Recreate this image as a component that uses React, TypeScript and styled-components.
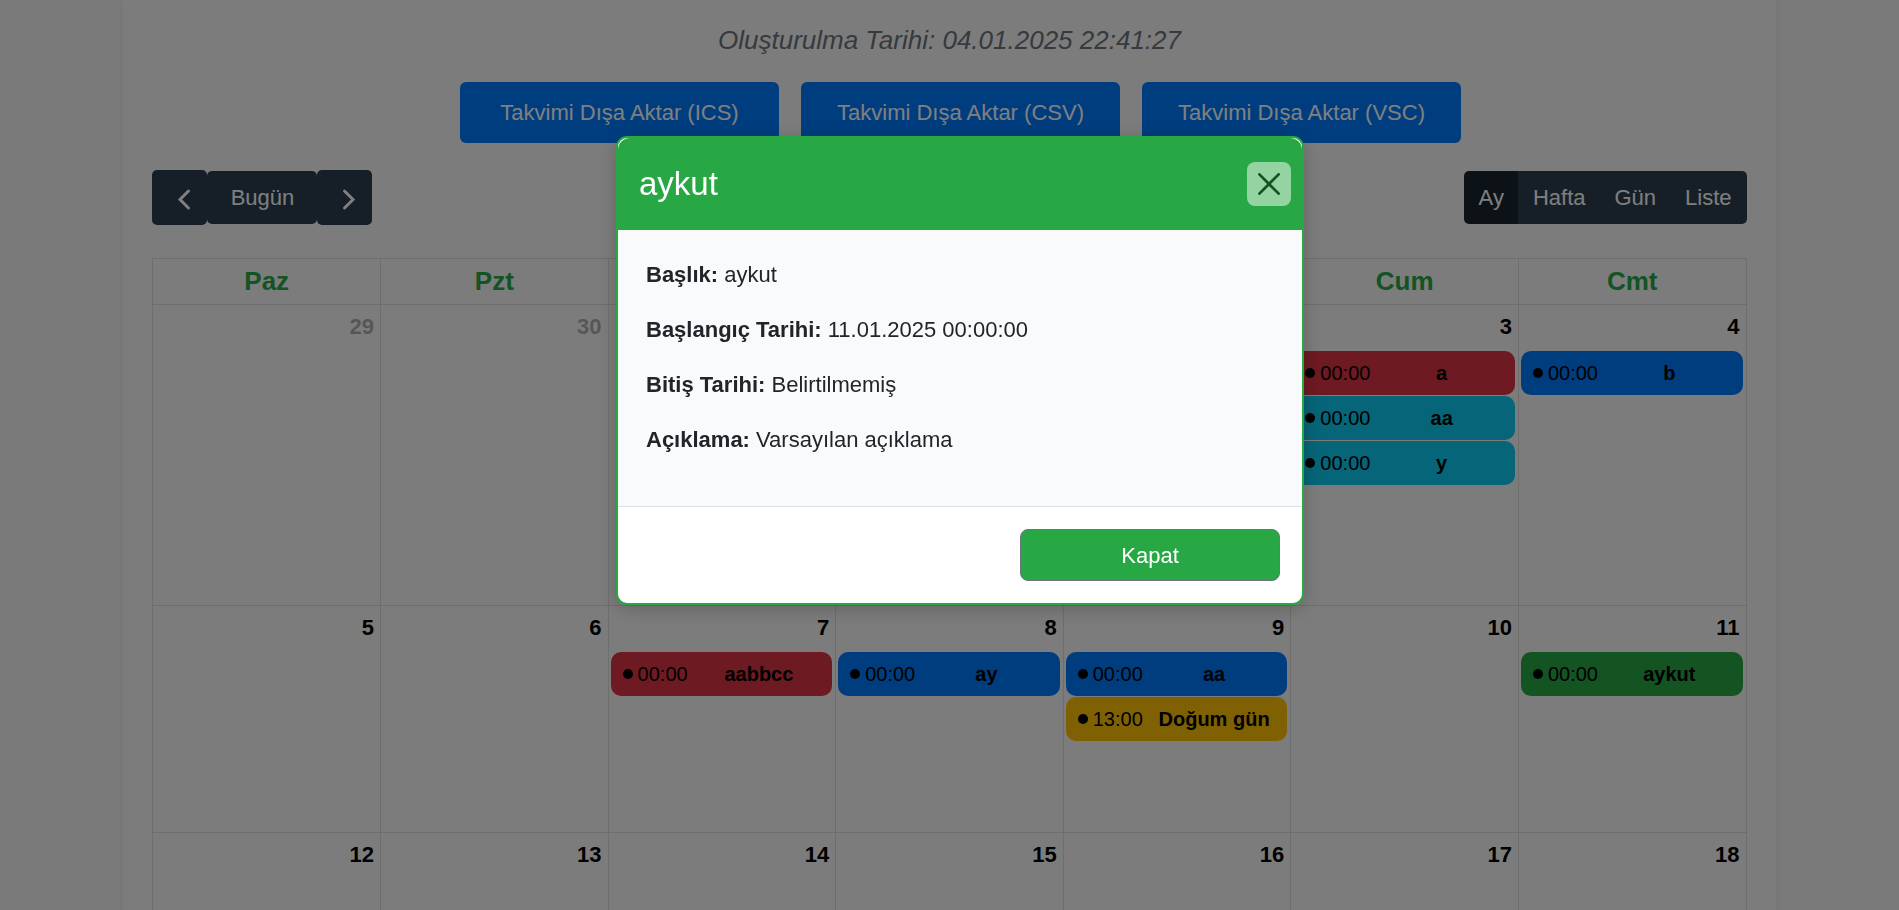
import React, { useState } from "react";
import styled, { createGlobalStyle } from "styled-components";

const GlobalStyle = createGlobalStyle`
  *, *::before, *::after { box-sizing: border-box; }
  body {
    margin: 0;
    overflow: hidden;
    background: #f4f4f4;
    color: #212529;
    font-family: "Liberation Sans", Arial, sans-serif;
    font-size: 22px;
    line-height: 33px;
  }
  button { font: inherit; cursor: pointer; }
`;

const Container = styled.main`
  width: 87%;
  min-height: 100vh;
  margin: 0 auto;
  padding: 20px 29px;
  background: #f9f9f9;
  box-shadow: 0 0 8px rgba(0, 0, 0, 0.05);
`;

const CreatedAt = styled.p`
  margin: 0;
  color: #6c757d;
  font-size: 26px;
  font-style: italic;
  line-height: 40px;
  text-align: center;
`;

const ExportBar = styled.div`
  display: flex;
  justify-content: center;
  margin: 22px 0 27px;
`;

const ExportButton = styled.button`
  min-width: 319px;
  height: 61px;
  margin-left: 22px;
  border: 0;
  border-radius: 6px;
  background: #007bff;
  color: #fff;
`;

const Toolbar = styled.div`
  display: flex;
  align-items: center;
  justify-content: space-between;
  margin-bottom: 33px;
`;

const ButtonGroup = styled.div`
  display: flex;
  align-items: center;
`;

const NavButton = styled.button<{ $wide?: boolean }>`
  display: flex;
  align-items: center;
  justify-content: center;
  width: ${(p) => (p.$wide ? "110px" : "55px")};
  height: ${(p) => (p.$wide ? "53px" : "55px")};
  padding: 0;
  border: 0;
  border-radius: 5px;
  background: #2c3e50;
  color: #fff;
`;

const ViewButton = styled.button<{ $active?: boolean }>`
  height: 53px;
  padding: 0 15px;
  border: 0;
  background: ${(p) => (p.$active ? "#1a252f" : "#2c3e50")};
  color: #fff;

  &:not(:first-child) { margin-left: -1px; }
  &:first-child { border-radius: 5px 0 0 5px; }
  &:last-child { border-radius: 0 5px 5px 0; }
`;

const Calendar = styled.table`
  width: 100%;
  border-collapse: collapse;
  table-layout: fixed;
`;

const WeekdayCell = styled.th`
  height: 46px;
  padding: 0;
  border: 1px solid #ddd;
  color: #28a745;
  font-size: 26px;
`;

const DayCell = styled.td<{ $height: number }>`
  height: ${(p) => p.$height}px;
  padding: 0 2px;
  border: 1px solid #ddd;
  vertical-align: top;
`;

const DayNumber = styled.div<{ $muted?: boolean }>`
  padding: 5px 4px 8px;
  color: #000;
  font-weight: bold;
  text-align: right;
  opacity: ${(p) => (p.$muted ? 0.3 : 1)};
`;

const EventList = styled.div`
  display: flex;
  flex-direction: column;
  gap: 1px;
`;

const EventItem = styled.a<{ $color: string }>`
  display: flex;
  align-items: center;
  height: 44px;
  margin: 0 1px 0 0;
  padding: 0 8px;
  border-radius: 10px;
  background: ${(p) => p.$color};
  color: #000;
  font-size: 20px;
  line-height: 30px;
  text-decoration: none;
`;

const EventDot = styled.span`
  flex: none;
  width: 10px;
  height: 10px;
  margin: 0 5px 0 4px;
  border-radius: 50%;
  background: #000;
`;

const EventTime = styled.span`
  margin-right: 6px;
`;

const EventTitle = styled.strong`
  flex: 1;
  min-width: 0;
  overflow: hidden;
  text-align: center;
  white-space: nowrap;
`;

const Backdrop = styled.div`
  position: fixed;
  inset: 0;
  display: flex;
  align-items: flex-start;
  justify-content: center;
  padding: 136px 0 0 21px;
  background: rgba(0, 0, 0, 0.5);
`;

const Dialog = styled.section`
  width: 688px;
  max-width: 100%;
  border: 2px solid #28a745;
  border-radius: 11px;
  background: #fff;
  box-shadow: 0 4px 20px rgba(0, 0, 0, 0.2);
`;

const DialogHeader = styled.header`
  display: flex;
  align-items: center;
  justify-content: space-between;
  height: 92px;
  padding: 0 11px 0 21px;
  border-radius: 12px 12px 0 0;
  background: #28a745;
`;

const DialogTitle = styled.h5`
  margin: 0;
  color: #fff;
  font-size: 33px;
  font-weight: normal;
  line-height: 50px;
`;

const CloseButton = styled.button`
  display: flex;
  width: 44px;
  height: 44px;
  padding: 11px;
  border: 0;
  border-radius: 8px;
  background: #fff;
  color: #000;
  opacity: 0.5;
`;

const DialogBody = styled.div`
  padding: 28px;
  background: #f8fafc;
`;

const Detail = styled.p`
  margin: 0 0 22px;
`;

const DialogFooter = styled.footer`
  display: flex;
  justify-content: flex-end;
  padding: 22px;
  border-top: 1px solid #dee2e6;
`;

const DismissButton = styled.button`
  width: 260px;
  height: 52px;
  border: 1px solid #6c757d;
  border-radius: 8px;
  background: #28a745;
  color: #fff;
`;

const Chevron = ({ direction }: { direction: "left" | "right" }) => (
  <svg
    width="33"
    height="33"
    viewBox="0 0 33 33"
    fill="none"
    stroke="currentColor"
    strokeWidth="3"
    strokeLinecap="round"
    aria-hidden="true"
  >
    <path d={direction === "left" ? "M25.5 10L17 18.5L25.5 27" : "M16.5 10L25 18.5L16.5 27"} />
  </svg>
);

const CloseIcon = () => (
  <svg width="22" height="22" viewBox="0 0 16 16" fill="currentColor" aria-hidden="true">
    <path d="M.293.293a1 1 0 0 1 1.414 0L8 6.586 14.293.293a1 1 0 1 1 1.414 1.414L9.414 8l6.293 6.293a1 1 0 0 1-1.414 1.414L8 9.414l-6.293 6.293a1 1 0 0 1-1.414-1.414L6.586 8 .293 1.707a1 1 0 0 1 0-1.414z" />
  </svg>
);

type CalendarEvent = { time: string; title: string; color: string };
type Day = { day: number; muted?: boolean; events?: CalendarEvent[] };

const red = "#dc3545";
const cyan = "#0dcaf0";
const blue = "#007bff";
const yellow = "#ffc107";
const green = "#28a745";

const exportFormats = ["ICS", "CSV", "VSC"];
const views = ["Ay", "Hafta", "Gün", "Liste"];
const weekdays = ["Paz", "Pzt", "Sal", "Çar", "Per", "Cum", "Cmt"];

const weeks: { height: number; days: Day[] }[] = [
  {
    height: 301,
    days: [
      { day: 29, muted: true },
      { day: 30, muted: true },
      { day: 31, muted: true },
      { day: 1 },
      { day: 2 },
      {
        day: 3,
        events: [
          { time: "00:00", title: "a", color: red },
          { time: "00:00", title: "aa", color: cyan },
          { time: "00:00", title: "y", color: cyan },
        ],
      },
      { day: 4, events: [{ time: "00:00", title: "b", color: blue }] },
    ],
  },
  {
    height: 227,
    days: [
      { day: 5 },
      { day: 6 },
      { day: 7, events: [{ time: "00:00", title: "aabbcc", color: red }] },
      { day: 8, events: [{ time: "00:00", title: "ay", color: blue }] },
      {
        day: 9,
        events: [
          { time: "00:00", title: "aa", color: blue },
          { time: "13:00", title: "Doğum gün", color: yellow },
        ],
      },
      { day: 10 },
      { day: 11, events: [{ time: "00:00", title: "aykut", color: green }] },
    ],
  },
  {
    height: 227,
    days: [12, 13, 14, 15, 16, 17, 18].map((day) => ({ day })),
  },
];

const details = [
  ["Başlık:", "aykut"],
  ["Başlangıç Tarihi:", "11.01.2025 00:00:00"],
  ["Bitiş Tarihi:", "Belirtilmemiş"],
  ["Açıklama:", "Varsayılan açıklama"],
];

export default function App() {
  const [open, setOpen] = useState(true);
  const [view, setView] = useState("Ay");

  return (
    <>
      <GlobalStyle />
      <Container>
        <CreatedAt>Oluşturulma Tarihi: 04.01.2025 22:41:27</CreatedAt>
        <ExportBar>
          {exportFormats.map((format) => (
            <ExportButton key={format}>Takvimi Dışa Aktar ({format})</ExportButton>
          ))}
        </ExportBar>
        <Toolbar>
          <ButtonGroup>
            <NavButton aria-label="Önceki"><Chevron direction="left" /></NavButton>
            <NavButton $wide>Bugün</NavButton>
            <NavButton aria-label="Sonraki"><Chevron direction="right" /></NavButton>
          </ButtonGroup>
          <ButtonGroup>
            {views.map((name) => (
              <ViewButton key={name} $active={name === view} onClick={() => setView(name)}>
                {name}
              </ViewButton>
            ))}
          </ButtonGroup>
        </Toolbar>
        <Calendar>
          <thead>
            <tr>
              {weekdays.map((name) => (
                <WeekdayCell key={name} scope="col">{name}</WeekdayCell>
              ))}
            </tr>
          </thead>
          <tbody>
            {weeks.map((week) => (
              <tr key={week.days[0].day}>
                {week.days.map(({ day, muted, events }) => (
                  <DayCell key={day} $height={week.height}>
                    <DayNumber $muted={muted}>{day}</DayNumber>
                    <EventList>
                      {events?.map((event) => (
                        <EventItem key={event.title} href="#" $color={event.color}>
                          <EventDot />
                          <EventTime>{event.time}</EventTime>
                          <EventTitle>{event.title}</EventTitle>
                        </EventItem>
                      ))}
                    </EventList>
                  </DayCell>
                ))}
              </tr>
            ))}
          </tbody>
        </Calendar>
      </Container>
      {open && (
        <Backdrop>
          <Dialog role="dialog" aria-modal="true" aria-labelledby="event-title">
            <DialogHeader>
              <DialogTitle id="event-title">aykut</DialogTitle>
              <CloseButton aria-label="Kapat" onClick={() => setOpen(false)}><CloseIcon /></CloseButton>
            </DialogHeader>
            <DialogBody>
              {details.map(([label, value]) => (
                <Detail key={label}><strong>{label}</strong> {value}</Detail>
              ))}
            </DialogBody>
            <DialogFooter>
              <DismissButton onClick={() => setOpen(false)}>Kapat</DismissButton>
            </DialogFooter>
          </Dialog>
        </Backdrop>
      )}
    </>
  );
}
